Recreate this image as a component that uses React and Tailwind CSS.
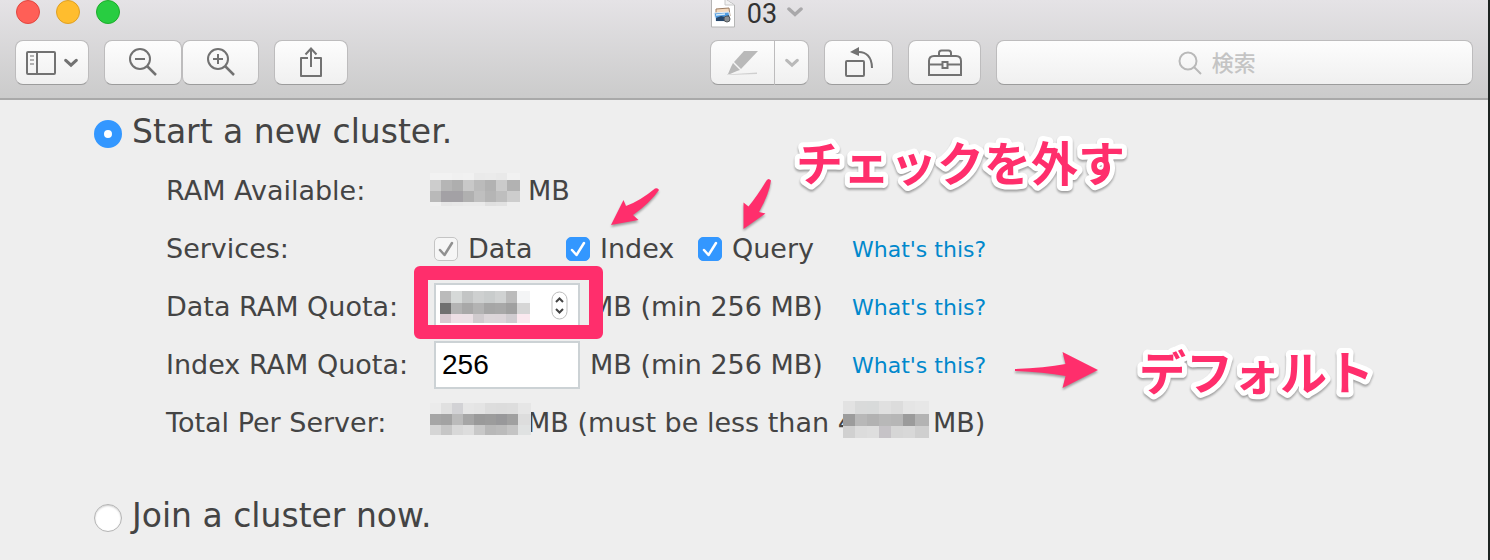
import React, { useState } from "react";

const ramAvailable = [
  [7, ["#f2f2f2", "#f2f2f2", "#f0f0f0", "#f1f1f1", "#eaeaea", "#ebebeb", "#e9e9e9", "#f1f1f1"]],
  [11, ["#cdcdcd", "#b5b5b5", "#aeaeae", "#c8c8c8", "#bbbbbb", "#b2b2b2", "#cbcbcb", "#b2b2b2"]],
  [11, ["#b9b9b9", "#a3a1a5", "#a3a1a5", "#b0b0b0", "#bfbfbf", "#b5b5b5", "#bebebe", "#cdcdcd"]],
  [4, ["#f0f0f0", "#e6e6e6", "#e8e8e8", "#eaeaea", "#eaeaea", "#e0e0e0", "#e2e2e2", "#eeeeee"]],
];

const dataQuota = [
  [12, ["#bbbbbb", "#d6d9d8", "#c3c5c5", "#ced0d0", "#c9cccc", "#d0d2d2", "#bbbbbb", "#f4f5f6"]],
  [11, ["#707070", "#b3b3b3", "#a8a8a8", "#b3b3b3", "#a6a6a6", "#a8a8a8", "#a0a0a0", "#d6d6d6"]],
  [9, ["#d8c9d0", "#eddfe5", "#ebe0e5", "#d0cbce", "#dcd6d9", "#dcd5d9", "#d0ccd0", "#fbe9ef"]],
];

const totalPerServer = [
  [11, ["#ebebeb", "#e0e0e0", "#d2d2d5", "#e6e6e6", "#e4e4e4", "#dddddd", "#dcdcdc", "#dddddd", "#e6e6e6"]],
  [11, ["#a6a6a6", "#a3a3a3", "#bbbbbb", "#a6a6a6", "#9a9a9a", "#9c9c9c", "#98989a", "#a0a0a0", "#dddddd"]],
  [10, ["#d5d5d5", "#c6c6c6", "#d8d8d8", "#dddddd", "#c8c8c8", "#b8b8b8", "#bbbbbb", "#c4c4c4", "#e0e2e2"]],
];

const totalLimit = [
  [13, ["#e2e2e2", "#d9dada", "#d8dada", "#e0e0e0", "#dcdcdc", "#e5e5e5", "#e7e7e7"]],
  [12, ["#9c9c9c", "#b8b8b8", "#b2b2b2", "#b8b8b8", "#b6b6b6", "#9b9b9b", "#b3b3b3"]],
  [12, ["#d0d0d0", "#dcdcdc", "#dedede", "#c6c3c7", "#d6d6d6", "#d8d8d8", "#cfcfcf"]],
];

function Mosaic({ rows, cell = 11, className }) {
  const height = rows.reduce((sum, row) => sum + row[0], 0);
  let y = 0;
  return (
    <svg
      width={rows[0][1].length * cell + 2}
      height={height}
      shapeRendering="crispEdges"
      className={`shrink-0 ${className}`}
    >
      {rows.map(([h, colors], r) => {
        const top = y;
        y += h;
        return colors.map((color, c) => (
          <rect
            key={`${r}-${c}`}
            x={c * cell}
            y={top}
            width={c === colors.length - 1 ? cell + 2 : cell}
            height={h}
            fill={color}
          />
        ));
      })}
    </svg>
  );
}

function ToolButton({ label, className, children }) {
  return (
    <button
      aria-label={label}
      className={`h-[45px] shrink-0 flex justify-center items-center border border-[#bdbcbd] border-b-[#9c9c9c] bg-linear-to-b from-[#fdfdfd] to-[#f0f0f0] ${className}`}
    >
      {children}
    </button>
  );
}

function Chevron({ className }) {
  return (
    <svg
      viewBox="0 0 16 10"
      fill="none"
      stroke="currentColor"
      strokeWidth="3.5"
      strokeLinecap="round"
      className={className}
    >
      <path d="M2 2l6 5.500L14 2" />
    </svg>
  );
}

function TitleBar() {
  return (
    <header className="bg-linear-to-b from-[#e5e3e6] to-[#cbcbcb] border-b-2 border-[#a9a9a9]">
      <div className="h-10 px-4 grid grid-cols-[1fr_auto_1fr] items-start">
        <div className="flex gap-4">
          <button
            aria-label="Close"
            className="size-6 rounded-full bg-[#ff5f57] border border-[#e2463f]"
          />
          <button
            aria-label="Minimize"
            className="size-6 rounded-full bg-[#ffbd2e] border border-[#dfa023]"
          />
          <button
            aria-label="Zoom"
            className="size-6 rounded-full bg-[#28cd41] border border-[#1dad2b]"
          />
        </div>
        <div className="h-7 flex items-center gap-3">
          <svg width="24" height="28" viewBox="0 0 24 28">
            <path d="M.5-1H14l9.500 6v22H.5z" fill="#fff" stroke="#b5b5b5" />
            <path d="M14-1v6h9" fill="#f2f2f2" stroke="#c8c8c8" />
            <path d="M5 9l13-1 1 8-14 1z" fill="#f3d9bd" stroke="#9b7c62" />
            <path d="M3 13l15-1 1 9H5z" fill="#4f9be0" stroke="#e8eef4" />
            <path d="M5 18l5-2 4 1 4-2 1 6H5z" fill="#26466a" />
            <path d="M5 15l9-1" stroke="#d9ecf8" strokeWidth="1.5" />
            <circle cx="16" cy="19" r="3" fill="#8b8f93" stroke="#55595c" />
          </svg>
          <h1 className="font-[Roboto,sans-serif] text-[27px] leading-7 text-[#333]">
            03
          </h1>
        </div>
        <button
          aria-label="Document menu"
          className="h-6 ml-2.5 justify-self-start flex items-center text-[#a9a8aa]"
        >
          <Chevron className="w-4 h-2.5" />
        </button>
      </div>

      <div className="px-[15px] pb-[13px] flex gap-[15px] text-[#727272]">
        <ToolButton label="Sidebar" className="w-[74px] gap-2 rounded-lg">
          <svg width="30" height="24" viewBox="0 0 30 24" fill="none" stroke="currentColor">
            <rect x="1" y="1" width="28" height="22" rx="1" strokeWidth="2" />
            <path d="M11 1v22" strokeWidth="2" />
            <path d="M4 5h4M4 9h4M4 13h4" strokeWidth="1.5" stroke="#9a9a9a" />
          </svg>
          <Chevron className="w-3.5 h-2.5" />
        </ToolButton>
        <div className="flex">
          <ToolButton label="Zoom out" className="w-[78px] rounded-lg">
            <svg width="30" height="30" viewBox="0 0 30 30" fill="none" stroke="currentColor" strokeWidth="2">
              <circle cx="12" cy="11" r="10" />
              <path d="M7 11h10" />
              <path d="M19 18l9 9" strokeWidth="2.5" />
            </svg>
          </ToolButton>
          <ToolButton label="Zoom in" className="w-[77px] rounded-lg">
            <svg width="30" height="30" viewBox="0 0 30 30" fill="none" stroke="currentColor" strokeWidth="2">
              <circle cx="12" cy="11" r="10" />
              <path d="M7 11h10M12 6v10" />
              <path d="M19 18l9 9" strokeWidth="2.5" />
            </svg>
          </ToolButton>
        </div>
        <ToolButton label="Share" className="w-[74px] rounded-lg">
          <svg width="24" height="32" viewBox="0 0 24 32" fill="none" stroke="currentColor" strokeWidth="2">
            <path d="M9 11H2v18h20V11h-7" strokeLinejoin="round" />
            <path d="M12 20V1M6.500 7.500 12 1.500l5.500 6" />
          </svg>
        </ToolButton>

        <div className="flex-[7]" />

        <div className="flex text-[#b9b9b9]">
          <ToolButton label="Highlight" className="w-[65px] rounded-l-lg">
            <svg width="32" height="26" viewBox="0 0 32 26" fill="currentColor">
              <path d="M17 1h14L14 19l-7-7z" />
              <path d="M6 13l7 7-3 1-7 3H1l3-7z" />
              <path d="M0 24.500l30-2V24l-30 1z" fill="#cfcfcf" />
            </svg>
          </ToolButton>
          <ToolButton label="Highlight colors" className="w-[34px] rounded-r-lg border-l-0">
            <Chevron className="w-3.5 h-2.5" />
          </ToolButton>
        </div>
        <ToolButton label="Rotate" className="w-[69px] rounded-lg">
          <svg width="30" height="32" viewBox="0 0 30 32" fill="none" stroke="currentColor" strokeWidth="2">
            <rect x="2" y="14" width="18" height="15" rx="1" />
            <path d="M13 5c9-1 15 5 15 16" />
            <path d="M15 0v9L6 5z" fill="currentColor" stroke="none" />
          </svg>
        </ToolButton>
        <ToolButton label="Markup toolbox" className="w-[73px] rounded-lg">
          <svg width="36" height="28" viewBox="0 0 36 28" fill="none" stroke="currentColor" strokeWidth="2">
            <path d="M2 26V12c0-3 2-5 5-5h22c3 0 5 2 5 5v14z" />
            <path d="M12 7V4c0-1.500 1-2.500 2.500-2.500h7C23 1.500 24 2.500 24 4v3" />
            <path d="M2 15.500h13M21 15.500h13" />
            <rect x="15.5" y="13" width="5" height="6" />
          </svg>
        </ToolButton>
        <label className="h-[45px] flex-[10] flex justify-center items-center gap-2.5 rounded-lg border border-[#bdbcbd] border-b-[#9c9c9c] bg-linear-to-b from-[#fdfdfd] to-[#f0f0f0]">
          <svg width="24" height="24" viewBox="0 0 24 24" fill="none" stroke="#b9b9b9" strokeWidth="2">
            <circle cx="10" cy="10" r="8.5" />
            <path d="M16 16l7 7" />
          </svg>
          <input
            type="text"
            aria-label="検索"
            placeholder="検索"
            className="w-20 mb-1 outline-none font-['Noto_Sans_CJK_JP',sans-serif] font-medium text-[22px] leading-8 placeholder:text-[#c4c4c4]"
          />
        </label>
      </div>
    </header>
  );
}

function ClusterRadio({ value, selected, onSelect, children }) {
  return (
    <label className="h-[60px] flex items-center gap-2.5 text-[33px] leading-10">
      <input
        type="radio"
        name="cluster"
        value={value}
        checked={selected === value}
        onChange={() => onSelect(value)}
        className="appearance-none mt-1 size-7 rounded-full bg-white border border-[#b4b4b4] shadow-[inset_0_1px_2px_#ccc] checked:border-[10px] checked:border-[#3397ff] checked:shadow-none"
      />
      {children}
    </label>
  );
}

function Service({ label, defaultChecked, disabled }) {
  return (
    <label className="w-[132px] flex items-center gap-2.5">
      <span className="relative size-6">
        <input
          type="checkbox"
          defaultChecked={defaultChecked}
          disabled={disabled}
          className="peer block appearance-none size-6 rounded-[5px] bg-white border border-[#b4b4b4] checked:bg-[#3397ff] checked:border-[#3397ff] disabled:bg-[#f6f6f6] disabled:border-[#c4c4c4]"
        />
        <svg
          viewBox="0 0 24 24"
          fill="none"
          stroke="currentColor"
          strokeWidth="2.5"
          strokeLinecap="round"
          strokeLinejoin="round"
          className="absolute inset-0 hidden text-white peer-checked:block peer-disabled:text-[#909090]"
        >
          <path d="M6 13l4.500 5L18 6" />
        </svg>
      </span>
      {label}
    </label>
  );
}

function WhatsThis() {
  return (
    <a href="#help" className="pt-0.5 text-[22px] text-[#0088cc]">
      What's this?
    </a>
  );
}

function Row({ children }) {
  return (
    <div className="h-[58px] grid grid-cols-[264px_422px_auto] items-center justify-start">
      {children}
    </div>
  );
}

const inputStyle =
  "block ml-1 w-[146px] h-12 px-1.5 bg-white border-2 border-[#ccd2d5] outline-none font-['Liberation_Sans',sans-serif] text-[28px] text-black";

function Annotations() {
  return (
    <div className="absolute inset-0 pointer-events-none">
      <div className="absolute left-[414px] top-[166px] w-[189px] h-[73px] rounded-md border-[14px] border-[#ff2e6c]" />
      <svg
        fill="#ff2e6c"
        className="absolute inset-0 w-full h-full drop-shadow-[0_2px_1px_#0005]"
      >
        <path d="M611 125l12.500-25 2.500 6q14-5 29-17.500q3-1 4 1.500q-9 13-26 25l5.500 5z" />
        <path d="M743.500 129v-26.500l5 4q9-11 18-26q2-3 4.500 0q-2 14-12 31.500l6.500 1.500z" />
        <path d="M1015 269q30-1 50.500-5l-3-12 35.500 18-35.500 18 3-12q-22-4-50.500-5z" />
        <g
          stroke="#fff"
          strokeWidth="10"
          strokeLinejoin="round"
          className="font-['Noto_Sans_CJK_JP',sans-serif] font-bold text-[47px] [paint-order:stroke]"
        >
          <text x="796" y="81">
            チェックを外す
          </text>
          <text x="1139" y="290">
            デフォルト
          </text>
        </g>
      </svg>
    </div>
  );
}

function App() {
  const [cluster, setCluster] = useState("new");

  return (
    <div className="min-h-screen bg-[#eee] border-r-2 border-[#1d2321] text-[#444] font-['DejaVu_Sans',sans-serif]">
      <TitleBar />
      <main className="relative pt-0.5 pl-[94px]">
        <ClusterRadio value="new" selected={cluster} onSelect={setCluster}>
          Start a new cluster.
        </ClusterRadio>

        <div className="pl-[72px] text-[27px] leading-8 whitespace-nowrap">
          <Row>
            <span>RAM Available:</span>
            <div className="flex items-center gap-2">
              <Mosaic rows={ramAvailable} className="mb-1" />
              MB
            </div>
          </Row>
          <Row>
            <span>Services:</span>
            <div className="pl-1 flex">
              <Service label="Data" defaultChecked disabled />
              <Service label="Index" defaultChecked />
              <Service label="Query" defaultChecked />
            </div>
            <WhatsThis />
          </Row>
          <Row>
            <label htmlFor="data-quota">Data RAM Quota:</label>
            <div className="flex items-center gap-2.5">
              <div className="relative">
                <input id="data-quota" type="text" inputMode="numeric" className={inputStyle} />
                <Mosaic rows={dataQuota} className="absolute left-2.5 top-2" />
                <svg
                  width="17"
                  height="29"
                  viewBox="0 0 17 29"
                  fill="none"
                  className="absolute right-3 top-2"
                >
                  <rect x="1" y="1" width="15" height="27" rx="7.5" fill="#fff" stroke="#bdbdbd" />
                  <path d="M5 11l3.500-3.500L12 11M5 18l3.500 3.500L12 18" stroke="#444" strokeWidth="2" />
                </svg>
              </div>
              MB (min 256 MB)
            </div>
            <WhatsThis />
          </Row>
          <Row>
            <label htmlFor="index-quota">Index RAM Quota:</label>
            <div className="flex items-center gap-2.5">
              <input
                id="index-quota"
                type="text"
                inputMode="numeric"
                defaultValue="256"
                className={inputStyle}
              />
              MB (min 256 MB)
            </div>
            <WhatsThis />
          </Row>
          <Row>
            <span>Total Per Server:</span>
            <div className="flex items-center">
              <Mosaic rows={totalPerServer} className="relative mb-2" />
              <span className="-ml-1">MB (must be less than 4</span>
              <Mosaic rows={totalLimit} cell={12} className="relative -ml-3 mb-2" />
              <span className="ml-1">MB)</span>
            </div>
          </Row>
        </div>

        <div className="mt-[34px]">
          <ClusterRadio value="join" selected={cluster} onSelect={setCluster}>
            Join a cluster now.
          </ClusterRadio>
        </div>

        <Annotations />
      </main>
    </div>
  );
}

export default App;
